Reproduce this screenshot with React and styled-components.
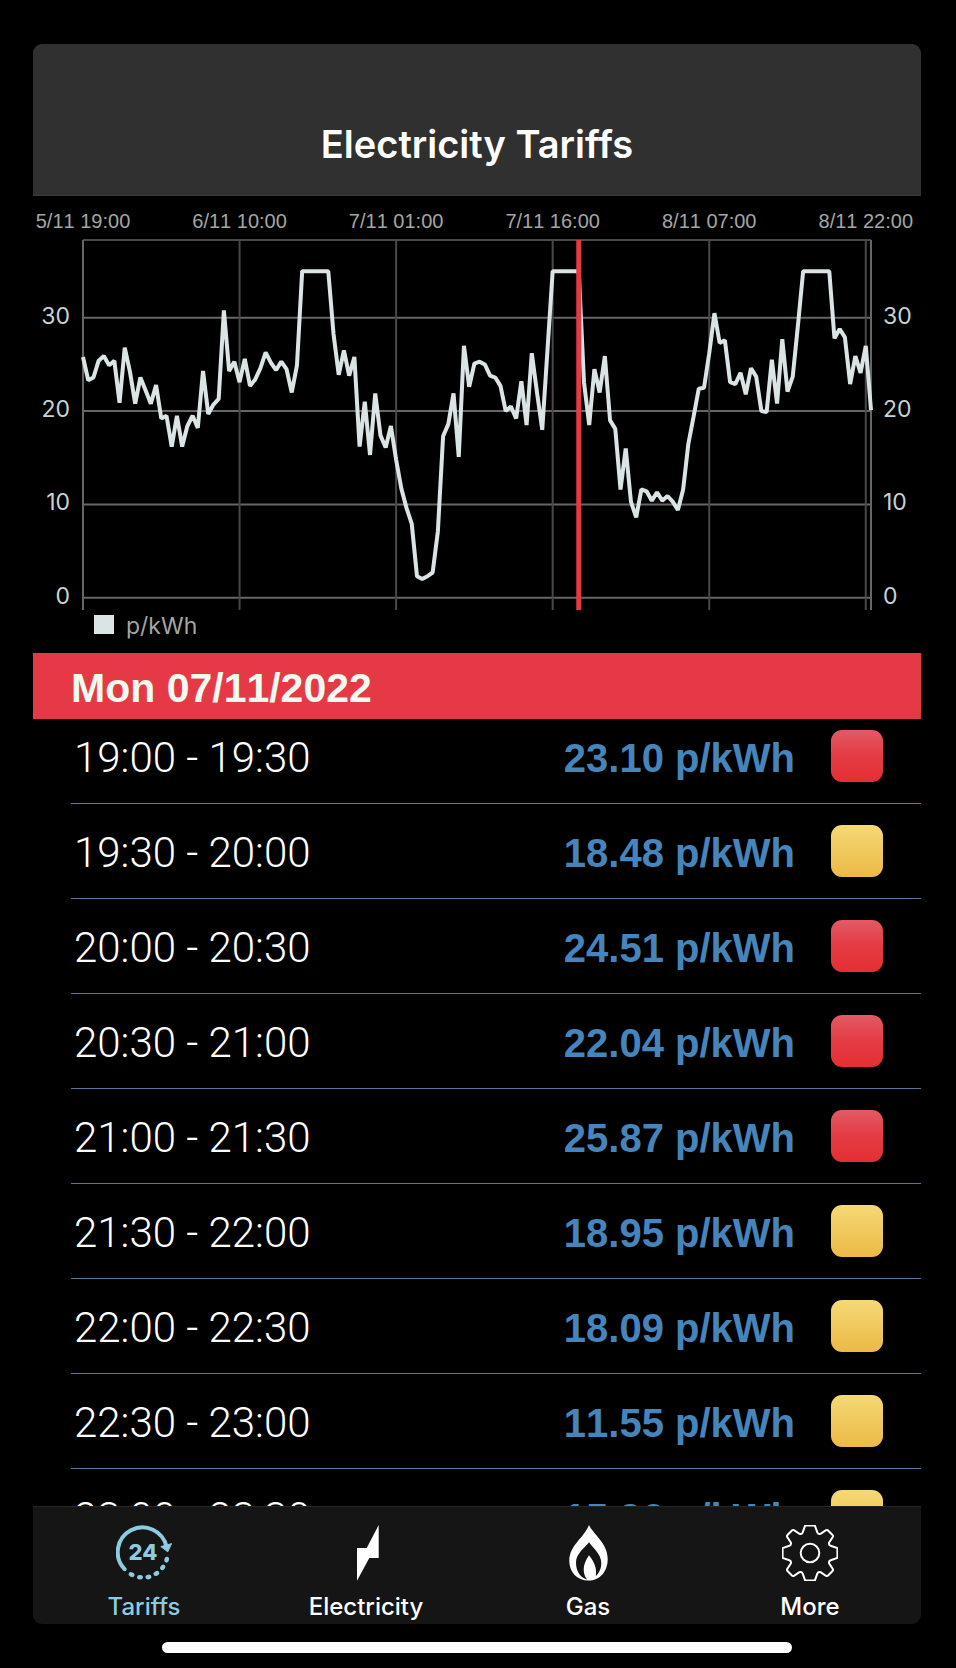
import React, { useLayoutEffect, useRef, useState } from 'react';
import styled, { createGlobalStyle } from 'styled-components';

const GlobalStyle = createGlobalStyle`
  * {
    box-sizing: border-box;
  }

  body {
    margin: 0;
    background-color: #000;
    font-family: Inter, 'Liberation Sans', sans-serif;
  }
`;

const Screen = styled.div`
  display: flex;
  flex-direction: column;
  height: 100vh;
  padding: 44px 35px 15px 33px;
  background-color: #000;
`;

const Panel = styled.main`
  display: flex;
  flex-direction: column;
  flex: 1;
  min-height: 0;
  border-radius: 9px;
  overflow: hidden;
`;

const Header = styled.header`
  display: flex;
  align-items: flex-end;
  justify-content: center;
  flex: none;
  height: 152px;
  padding-bottom: 28px;
  background-color: #303030;
  border-bottom: 1px solid #3c3c3c;
`;

const Title = styled.h1`
  margin: 0;
  font-size: 38px;
  font-weight: 600;
  line-height: 46px;
  color: #fff;
`;

const ChartSvg = styled.svg`
  display: block;
  flex: none;
  width: 100%;
`;

const GridLine = styled.line`
  stroke: ${({ $bright }) => ($bright ? '#666' : '#484848')};
  stroke-width: 2;
`;

const PriceLine = styled.polyline`
  fill: none;
  stroke: #dbe4e4;
  stroke-width: 4;
  stroke-linejoin: bevel;
`;

const NowLine = styled.line`
  stroke: #e63946;
  stroke-width: 5;
`;

const DateLabel = styled.text`
  font-family: 'Liberation Sans', Arial, sans-serif;
  font-size: 20px;
  font-kerning: none;
  text-anchor: middle;
  fill: #a5a5a5;
`;

const ValueLabel = styled.text`
  font-size: 23px;
  text-anchor: ${({ $end }) => ($end ? 'end' : 'start')};
  fill: #c9d2d3;
`;

const LegendLabel = styled.text`
  font-size: 23px;
  fill: #a5a5a5;
`;

const DayHeading = styled.h2`
  flex: none;
  margin: 0;
  padding: 4px 38px 0;
  height: 66px;
  background-color: #e63946;
  color: #f1faee;
  font-family: 'Liberation Sans', Arial, sans-serif;
  font-size: 41px;
  font-weight: 700;
  font-kerning: none;
  line-height: 62px;
`;

const Scroller = styled.div`
  flex: 1;
  min-height: 0;
  padding-left: 38px;
  overflow-y: auto;
  scrollbar-width: none;
`;

const Table = styled.table`
  width: 100%;
  border-collapse: collapse;
  line-height: 48px;
`;

const Row = styled.tr`
  height: 95px;
  border-bottom: 1px solid #55779a;
`;

const Period = styled.th`
  padding: 5px 0 0 3px;
  font-family: Roboto, 'Liberation Sans', sans-serif;
  font-size: 42px;
  font-weight: 300;
  text-align: left;
  color: #fff;
`;

const Price = styled.td`
  padding: 5px 36px 0 0;
  font-family: 'Liberation Sans', Arial, sans-serif;
  font-size: 40px;
  font-weight: 700;
  font-kerning: none;
  text-align: right;
  color: #4585bb;
`;

const LevelCell = styled.td`
  width: 90px;
  padding: 1px 0 0;
`;

const Level = styled.span`
  display: block;
  width: 52px;
  height: 52px;
  border-radius: 11px;
  background-image: ${({ $high }) =>
    $high
      ? 'linear-gradient(#e25a65 0%, #e53b44 50%, #e42f33 100%)'
      : 'linear-gradient(#f5d975 0%, #ecb945 100%)'};
`;

const TabBar = styled.nav`
  display: grid;
  grid-template-columns: repeat(4, 1fr);
  flex: none;
  background-color: #151515;
  border-top: 1px solid #262626;
`;

const Tab = styled.button`
  display: flex;
  flex-direction: column;
  align-items: center;
  gap: 12px;
  padding: 18px 0 3px;
  border: 0;
  background: none;
  color: ${({ $active }) => ($active ? '#8ecae0' : '#fff')};
  font-family: inherit;
  font-size: 24px;
  font-weight: 500;
  line-height: 28px;
  cursor: pointer;
`;

const TabIcon = styled.svg`
  width: 56px;
  height: 56px;
`;

const IconText = styled.text`
  font-size: 22px;
  font-weight: 800;
  text-anchor: middle;
  fill: currentColor;
`;

const HomeIndicator = styled.div`
  flex: none;
  width: 71%;
  height: 11px;
  margin: 18px auto 0;
  border-radius: 6px;
  background-color: #fff;
`;

// Half-hourly unit prices, starting 5/11 19:00
const prices = [
  25.8, 23.3, 23.6, 25.4, 25.9, 24.9, 25.4, 20.9, 26.8, 24.2,
  20.8, 23.6, 22.2, 20.8, 22.8, 19.2, 19.5, 16.2, 19.5, 16.2,
  18.4, 19.5, 18.2, 24.3, 19.7, 20.7, 21.3, 30.8, 24.3, 25.3,
  23.1, 25.6, 22.7, 23.4, 24.6, 26.3, 25.2, 24.4, 25.3, 24.5,
  22, 24.9, 35, 35, 35, 35, 35, 35, 28.3, 23.9,
  26.5, 23.8, 25.8, 16.2, 21, 15.3, 21.9, 17.4, 16.1, 18.4,
  14.8, 11.7, 9.6, 7.9, 2.3, 2, 2.3, 2.7, 7.1, 17.3,
  18.6, 21.9, 15.1, 27, 22.6, 25.1, 25.3, 25, 23.8, 23.6,
  22.7, 20, 20.5, 19.2, 23.2, 18.5, 26.2, 22, 18, 26.5,
  35, 35, 35, 35, 35, 35, 23.1, 18.5, 24.5, 22,
  25.9, 19, 18.1, 11.6, 16, 10.3, 8.6, 11.6, 11.4, 10.4,
  11.3, 10.4, 10.9, 10.3, 9.4, 11.6, 16.5, 19.4, 22.4, 22.5,
  26.2, 30.5, 27.3, 27.6, 23.1, 22.9, 24.1, 21.8, 24.6, 23.7,
  20, 19.9, 25.5, 20.8, 27.7, 22.1, 23.7, 29.2, 35, 35,
  35, 35, 35, 35, 27.8, 28.8, 27.9, 22.9, 25.9, 24.1,
  27, 20.1,
];

const dates = ['5/11 19:00', '6/11 10:00', '7/11 01:00', '7/11 16:00', '8/11 07:00', '8/11 22:00'];

const plot = { left: 50, right: 838, top: 44, bottom: 414 };
const nowIndex = 95;

const xAt = (index) => plot.left + (index * (plot.right - plot.left)) / (prices.length - 1);
const yAt = (value) => 401.7 - value * 9.33;

const PriceChart = () => (
  <ChartSvg viewBox="0 0 888 457" role="img" aria-label="Electricity price chart">
    {[0, 10, 20, 30].map((value) => (
      <g key={value}>
        <GridLine $bright x1={plot.left} x2={plot.right} y1={yAt(value)} y2={yAt(value)} />
        <ValueLabel $end x={37} y={yAt(value) + 6}>{value}</ValueLabel>
        <ValueLabel x={850} y={yAt(value) + 6}>{value}</ValueLabel>
      </g>
    ))}
    {dates.map((date, index) => (
      <g key={date}>
        <GridLine x1={xAt(index * 30)} x2={xAt(index * 30)} y1={plot.top} y2={plot.bottom} />
        <DateLabel x={xAt(index * 30)} y={32}>{date}</DateLabel>
      </g>
    ))}
    <GridLine x1={plot.left} x2={plot.right} y1={plot.top} y2={plot.top} />
    <GridLine $bright x1={plot.left} x2={plot.left} y1={plot.top} y2={plot.bottom} />
    <GridLine $bright x1={plot.right} x2={plot.right} y1={plot.top} y2={plot.bottom} />
    <PriceLine points={prices.map((price, index) => `${xAt(index)},${yAt(price)}`).join(' ')} />
    <NowLine x1={xAt(nowIndex)} x2={xAt(nowIndex)} y1={plot.top} y2={plot.bottom} />
    <rect x="61" y="419" width="20" height="19" fill="#dbe4e4" />
    <LegendLabel x="93" y="438">p/kWh</LegendLabel>
  </ChartSvg>
);

const TariffsIcon = () => (
  <TabIcon viewBox="0 0 56 56" aria-hidden="true">
    <path
      d="M8.6 44.2A24.7 24.7 0 1 1 50.6 22"
      fill="none"
      stroke="currentColor"
      strokeWidth="4"
      strokeLinecap="round"
    />
    <path d="M44.8 21.6L55.6 18.6L51.8 26.8Z" fill="currentColor" stroke="currentColor" strokeLinejoin="round" />
    {[[50.7, 34.7, 105], [46.7, 42.4, 125], [40.4, 48.4, 150], [32.4, 52, 168], [24, 52.2, 185], [15.6, 49.6, 205]].map(
      ([x, y, angle]) => (
        <ellipse key={angle} cx={x} cy={y} rx="3" ry="2.3" transform={`rotate(${angle} ${x} ${y})`} fill="currentColor" />
      )
    )}
    <IconText x="27" y="35">24</IconText>
  </TabIcon>
);

const ElectricityIcon = () => (
  <TabIcon viewBox="0 0 56 56" aria-hidden="true">
    <path d="M40.7 0V33H31.3L19 55.8V23H28.7Z" fill="currentColor" />
  </TabIcon>
);

const GasIcon = () => (
  <TabIcon viewBox="0 0 56 56" aria-hidden="true">
    <path
      d="M29 0C33 9 47.7 18 47.7 34C47.7 47 39.5 55.6 28.5 55.6C17 55.6 9.3 47 9.3 36C9.3 20 24 13 29 0Z
        M29 17.3C26 22 16 28 16 37.5C16 46 20 52.5 27 54.5C25 52 23.7 48.5 23.7 44.5C23.7 40 25.5 35.5 29 30.3
        C35.5 38.5 36.8 44.5 35.8 51C38.8 48.5 41.3 44 41.3 38C41.3 29 32 22 29 17.3Z"
      fill="currentColor"
      fillRule="evenodd"
    />
  </TabIcon>
);

const MoreIcon = () => (
  <TabIcon viewBox="-28 -28 56 56" aria-hidden="true" fill="none" stroke="currentColor" strokeWidth="2">
    {[0, 90, 180, 270].map((angle) => (
      <path
        key={angle}
        transform={`rotate(${angle})`}
        d="M0 -27.4H4.9L7.3 -20.6Q8.2 -18.4 10.6 -19.2L16 -22.8Q17.3 -23.4 18.3 -22.3L22.3 -18.3Q23.4 -17.3 22.8 -16L19.2 -10.6Q18.4 -8.2 20.6 -7.3L27.4 -4.9V0"
      />
    ))}
    <circle r="9.3" />
  </TabIcon>
);

const tariffs = [
  { period: '19:00 - 19:30', price: '23.10', high: true },
  { period: '19:30 - 20:00', price: '18.48', high: false },
  { period: '20:00 - 20:30', price: '24.51', high: true },
  { period: '20:30 - 21:00', price: '22.04', high: true },
  { period: '21:00 - 21:30', price: '25.87', high: true },
  { period: '21:30 - 22:00', price: '18.95', high: false },
  { period: '22:00 - 22:30', price: '18.09', high: false },
  { period: '22:30 - 23:00', price: '11.55', high: false },
  { period: '23:00 - 23:30', price: '15.96', high: false },
];

const tabs = [
  { label: 'Tariffs', Icon: TariffsIcon },
  { label: 'Electricity', Icon: ElectricityIcon },
  { label: 'Gas', Icon: GasIcon },
  { label: 'More', Icon: MoreIcon },
];

const App = () => {
  const [activeTab, setActiveTab] = useState('Tariffs');
  const scroller = useRef(null);

  // Open the list slightly scrolled, under the day heading
  useLayoutEffect(() => {
    scroller.current.scrollTop = 11;
  }, []);

  return (
    <>
      <GlobalStyle />
      <Screen>
        <Panel>
          <Header>
            <Title>Electricity Tariffs</Title>
          </Header>
          <PriceChart />
          <DayHeading>Mon 07/11/2022</DayHeading>
          <Scroller ref={scroller}>
            <Table>
              <tbody>
                {tariffs.map((tariff) => (
                  <Row key={tariff.period}>
                    <Period scope="row">{tariff.period}</Period>
                    <Price>{tariff.price} p/kWh</Price>
                    <LevelCell>
                      <Level $high={tariff.high} role="img" aria-label={tariff.high ? 'High' : 'Medium'} />
                    </LevelCell>
                  </Row>
                ))}
              </tbody>
            </Table>
          </Scroller>
          <TabBar>
            {tabs.map(({ label, Icon }) => (
              <Tab key={label} type="button" $active={label === activeTab} onClick={() => setActiveTab(label)}>
                <Icon />
                {label}
              </Tab>
            ))}
          </TabBar>
        </Panel>
        <HomeIndicator />
      </Screen>
    </>
  );
};

export default App;
